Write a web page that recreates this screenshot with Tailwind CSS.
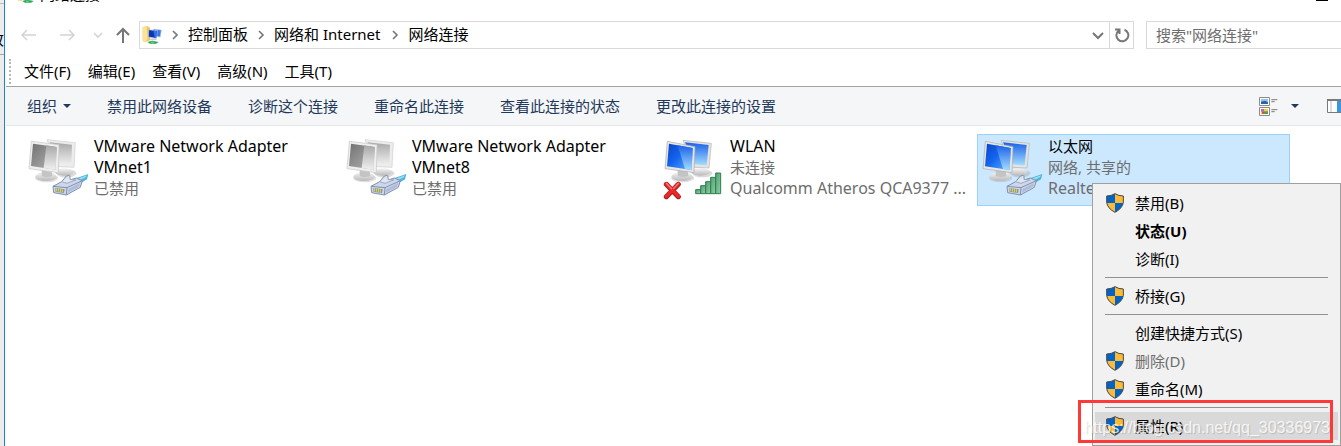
<!DOCTYPE html>
<html lang="zh-CN">
<head>
  <meta charset="UTF-8" />
  <meta name="viewport" content="width=device-width, initial-scale=1.0"/>
  <title>网络连接</title>
  <script src="https://cdn.jsdelivr.net/npm/@tailwindcss/browser@4"></script>
</head>
<body class="relative min-h-screen flex overflow-hidden bg-white text-black text-[15px] leading-[21px] font-['Noto_Sans','Noto_Sans_CJK_SC',sans-serif]">

  <!-- Icon sprites -->
  <svg class="absolute w-0 h-0" aria-hidden="true">
    <defs>
      <linearGradient id="blueScreen" x1="0" y1="0" x2="1" y2="1">
        <stop offset="0" stop-color="#0a45c8"/><stop offset=".45" stop-color="#1463ee"/><stop offset="1" stop-color="#5fb4ff"/>
      </linearGradient>
      <linearGradient id="blueShine" x1="0" y1="0" x2="0" y2="1">
        <stop offset="0" stop-color="#1a62e8"/><stop offset="1" stop-color="#a4dcff"/>
      </linearGradient>
      <linearGradient id="grayScreen" x1="0" y1="0" x2="1" y2="1">
        <stop offset="0" stop-color="#727272"/><stop offset="1" stop-color="#b4b4b4"/>
      </linearGradient>
      <linearGradient id="grayShine" x1="0" y1="0" x2="0" y2="1">
        <stop offset="0" stop-color="#a8a8a8"/><stop offset="1" stop-color="#efefef"/>
      </linearGradient>
      <linearGradient id="metal" x1="0" y1="0" x2="0" y2="1">
        <stop offset="0" stop-color="#f4f4f4"/><stop offset="1" stop-color="#b9b9b9"/>
      </linearGradient>
      <linearGradient id="barGreen" x1="0" y1="0" x2="1" y2="1">
        <stop offset="0" stop-color="#4fa06f"/><stop offset="1" stop-color="#8fd0a6"/>
      </linearGradient>
      <symbol id="stands" viewBox="18 15 192 198">
        <ellipse cx="136" cy="130" rx="30" ry="12" fill="#999" opacity=".35"/>
        <ellipse cx="130" cy="126" rx="28" ry="11" fill="url(#metal)"/>
        <ellipse cx="77" cy="144" rx="35" ry="13" fill="#999" opacity=".3"/>
        <ellipse cx="75" cy="140" rx="32" ry="13" fill="url(#metal)"/>
        <path d="M62 118L92 122L94 138Q78 144 62 138Z" fill="#c4c4c4"/>
      </symbol>
      <symbol id="pcBlue" viewBox="18 15 192 198">
        <use href="#stands" x="18" y="15" width="192" height="198"/>
        <path d="M78 31L163 40L156 114L112 112Z" fill="#e3e3e3" stroke="#b4b4b4" stroke-width="2"/>
        <path d="M84 37L155 45L149 106L112 103Z" fill="url(#blueShine)"/>
        <path d="M31 34L114 50L111 128L24 116Z" fill="#e6e6e6" stroke="#aaa" stroke-width="2"/>
        <path d="M36 41L107 54L104 120L30 109Z" fill="url(#blueScreen)"/>
        <path d="M62 46L107 54L104 120L84 117Z" fill="url(#blueShine)"/>
      </symbol>
      <symbol id="pcGray" viewBox="18 15 192 198">
        <use href="#stands" x="18" y="15" width="192" height="198"/>
        <path d="M78 29L163 38L159 112L112 110Z" fill="#ececec" stroke="#cfcfcf" stroke-width="2"/>
        <path d="M86 37L153 44L151 104L112 102Z" fill="url(#grayShine)"/>
        <path d="M31 34L114 44L112 128L24 116Z" fill="#efefef" stroke="#c6c6c6" stroke-width="2"/>
        <path d="M36 41L107 51L104 119L30 108Z" fill="url(#grayScreen)"/>
        <path d="M76 46L107 51L104 119L68 114Z" fill="url(#grayShine)"/>
      </symbol>
      <symbol id="plug" viewBox="18 15 192 198">
        <path d="M156 148L202 132L198 148L178 160Z" fill="#4db4dc"/>
        <path d="M166 148L198 136L194 142L172 153Z" fill="#9be0f4"/>
        <path d="M96 169L122 155L136 138L146 136L147 150L166 144L184 152L178 172L136 195L98 188Z" fill="#cdd7e9" stroke="#8190ae" stroke-width="3" stroke-linejoin="round"/>
        <path d="M96 169L138 173L184 152M138 173L136 195" fill="none" stroke="#8190ae" stroke-width="3"/>
        <path d="M122 155L138 160L164 150L147 148L146 136" fill="#dfe6f2" stroke="#8190ae" stroke-width="2"/>
        <path d="M142 177L178 158L174 170L141 188Z" fill="#aebddb"/>
        <path d="M103 174L131 178L129 189L103 185Z" fill="#8e9880"/>
        <path d="M106 175v9M112 176v9M118 177v9M124 178v9" stroke="#e2d774" stroke-width="3"/>
      </symbol>
      <symbol id="wifiOff" viewBox="18 15 192 198">
        <path d="M28 163L64 200M64 163L28 200" stroke="#a91111" stroke-width="15" stroke-linecap="round"/>
        <path d="M28 162L64 199M64 162L28 199" stroke="#e8292b" stroke-width="11" stroke-linecap="round"/>
        <path d="M28 160L44 176M64 160L50 175" stroke="#f68080" stroke-width="4" stroke-linecap="round"/>
        <g fill="url(#barGreen)" stroke="#2f7d50" stroke-width="3">
          <path d="M116 179h15v12h-15z"/><path d="M131 167h15v24h-15z"/><path d="M146 155h15v36h-15z"/><path d="M161 142h15v49h-15z"/><path d="M176 129h15v62h-15z"/>
        </g>
      </symbol>
      <symbol id="shield" viewBox="0 0 54 60">
        <path d="M27 2Q38 9 52 9V28Q50 46 27 58Q4 46 2 28V9Q16 9 27 2Z" fill="#0063c6"/>
        <path d="M27 2Q38 9 52 9V30H27Z" fill="#ffba35"/>
        <path d="M2 30H27V58Q5 46 2 30Z" fill="#ffba35"/>
        <path d="M27 2Q38 9 52 9V28Q50 46 27 58Q4 46 2 28V9Q16 9 27 2Z" fill="none" stroke="#4b4b4b" stroke-width="3"/>
      </symbol>
      <symbol id="netFolder" viewBox="0 0 60 60">
        <path d="M2 6L16 3L24 8V46L8 52L2 48Z" fill="#ecc75f"/>
        <path d="M2 6L14 3L17 42L8 52L2 48Z" fill="#fbe49a"/>
        <path d="M34 12L58 15L55 36L36 34Z" fill="#3a78e0" stroke="#c9d3e4" stroke-width="2"/>
        <path d="M20 14L46 17L43 40L19 36Z" fill="#0c35b5" stroke="#c5cfe0" stroke-width="2"/>
        <path d="M34 17L45 18L43 38L38 37Z" fill="#2f74e6"/>
        <ellipse cx="34" cy="43" rx="10" ry="3" fill="#c9cdd2"/>
        <path d="M16 51L30 47L50 51L42 56L24 56Z" fill="#29a65a"/>
        <path d="M26 50L38 50L34 53L28 53Z" fill="#7fdc9d"/>
      </symbol>
    </defs>
  </svg>

  <!-- Window behind -->
  <div class="w-1 shrink-0 bg-[#ececec] overflow-hidden" aria-hidden="true">
    <div class="h-1 border-b border-[#bdbdbd]"></div>
    <div class="h-[51px] pt-[25px] border-b border-[#a5a5a5] flex justify-end"><span>改</span></div>
  </div>

  <div class="flex-1 min-w-0 border-l border-[#1883d7]">
    <!-- Title bar -->
    <header class="h-[21px] flex justify-between">
      <div class="flex items-start gap-[3px] pl-3 -mt-4">
        <svg class="w-5 h-5"><use href="#netFolder"/></svg>
        <span class="whitespace-nowrap">网络连接</span>
      </div>
      <div class="w-3 h-px mr-[13px] bg-black"></div>
    </header>

    <!-- Address bar -->
    <div class="flex h-7">
      <div class="w-[134px] shrink-0 flex items-center pl-4">
        <button aria-label="后退"><svg class="w-4 h-4" viewBox="0 0 16 16" fill="none" stroke="#d4d4d4" stroke-width="1.5"><path d="M15 8H1M6 3L1 8l5 5"/></svg></button>
        <button class="ml-[23px]" aria-label="前进"><svg class="w-4 h-4" viewBox="0 0 16 16" fill="none" stroke="#d4d4d4" stroke-width="1.5"><path d="M0 8h14M9 3l5 5-5 5"/></svg></button>
        <button class="ml-[17px]" aria-label="最近的位置"><svg class="w-2.5 h-2.5" viewBox="0 0 10 10" fill="none" stroke="#d4d4d4" stroke-width="1.6"><path d="M1 3l4 4 4-4"/></svg></button>
        <button class="ml-3" aria-label="上移"><svg class="w-4 h-4" viewBox="0 0 16 16" fill="none" stroke="#767676" stroke-width="2"><path d="M8 16V2M2 8l6-6 6 6"/></svg></button>
      </div>
      <nav class="flex-1 flex items-center border border-[#d9d9d9] pl-[2px] pb-px whitespace-nowrap">
        <svg class="w-5 h-5 shrink-0"><use href="#netFolder"/></svg>
        <svg class="w-2 h-2.5 mx-[9px]" viewBox="0 0 8 10" fill="none" stroke="#767676" stroke-width="1.6"><path d="M2 1l4 4-4 4"/></svg>
        <a href="#">控制面板</a>
        <svg class="w-2 h-2.5 mx-[9px]" viewBox="0 0 8 10" fill="none" stroke="#767676" stroke-width="1.6"><path d="M2 1l4 4-4 4"/></svg>
        <a href="#">网络和 Internet</a>
        <svg class="w-2 h-2.5 mx-[10px]" viewBox="0 0 8 10" fill="none" stroke="#767676" stroke-width="1.6"><path d="M2 1l4 4-4 4"/></svg>
        <a href="#">网络连接</a>
        <button class="ml-auto mr-1" aria-label="以前的位置"><svg class="w-3.5 h-3.5" viewBox="0 0 14 14" fill="none" stroke="#767676" stroke-width="2"><path d="M2 5l5 5 5-5"/></svg></button>
      </nav>
      <button class="w-6 flex items-center justify-center border border-l-0 border-[#d9d9d9]" aria-label="刷新">
        <svg class="w-4 h-4" viewBox="0 0 16 16" fill="none" stroke="#767676" stroke-width="2"><path d="M10.500 2.700a6 6 0 1 1-6 1M1 2.500h4.500V7"/></svg>
      </button>
      <input type="search" aria-label="搜索" placeholder='搜索"网络连接"' class="w-[195px] ml-3 pl-[9px] border border-r-0 border-[#d9d9d9] placeholder:text-[#6d6d6d]"/>
    </div>

    <!-- Menu bar -->
    <div class="h-[38px] pt-2 flex items-center border-b border-[#a0a3a8] ml-px">
      <div class="w-[2px] h-[25px] ml-[3px] border-l-2 border-dotted border-[#b8b8b8]"></div>
      <div class="flex gap-[17px] ml-[13px] whitespace-nowrap">
        <button>文件(F)</button>
        <button>编辑(E)</button>
        <button>查看(V)</button>
        <button>高级(N)</button>
        <button>工具(T)</button>
      </div>
    </div>

    <!-- Command bar -->
    <div class="h-[39px] ml-px pl-[21px] flex items-center border-b border-[#e5e6e7] bg-[#f5f6f7] text-[#1e395b] whitespace-nowrap overflow-hidden">
      <div class="flex gap-9">
        <button class="flex items-center gap-[6px]">组织
          <svg class="w-2 h-1" viewBox="0 0 8 4"><path d="M0 0h8L4 4z" fill="#1e395b"/></svg>
        </button>
        <button>禁用此网络设备</button>
        <button>诊断这个连接</button>
        <button>重命名此连接</button>
        <button>查看此连接的状态</button>
        <button>更改此连接的设置</button>
      </div>
      <button class="ml-auto flex items-center gap-[13px]" aria-label="更改视图">
        <svg class="w-[19px] h-[19px]" viewBox="0 0 57 57">
          <path d="M1.500 1.500h30v24h-30zM1.500 31.500h30v24h-30z" fill="#fff" stroke="#8b8b8b" stroke-width="3"/>
          <path d="M6 6h21v15H6z" fill="#8fc4f0"/><path d="M6 14l12-3 9 5v5H6z" fill="#2c62a8"/>
          <path d="M6 36h21v15H6z" fill="#f0c94e"/><path d="M6 36h9v8H6z" fill="#b06ac0"/><path d="M14 43h13v8H14z" fill="#4da44d"/><path d="M9 44h7v7H9z" fill="#d7533c"/>
          <path d="M37 8h18M37 14h10M37 38h18M37 44h10" stroke="#7a7a7a" stroke-width="3"/>
        </svg>
        <svg class="w-2 h-1" viewBox="0 0 8 4"><path d="M0 0h8L4 4z" fill="#1e395b"/></svg>
      </button>
      <button class="ml-7 flex" aria-label="预览窗格">
        <svg class="w-[14px] h-[14px]" viewBox="0 0 14 14"><path d="M.5.5H14v13H.5z" fill="#fff" stroke="#7a7a7a"/><path d="M0 0h14v2H0z" fill="#7a7a7a"/><path d="M4 2v11" stroke="#bbb"/><path d="M10 2h4v11h-4z" fill="#3a96dd"/></svg>
      </button>
    </div>

    <!-- Connections -->
    <main class="grid grid-cols-[repeat(auto-fill,313px)] gap-x-[5px] pt-2 pl-[18px]">
      <div class="flex gap-[3px] h-[72px] px-[3px] border border-transparent">
        <svg class="w-16 h-[66px] shrink-0"><use href="#pcGray"/><use href="#plug"/></svg>
        <div class="w-[200px] pt-px">
          <p class="text-base leading-[21px]">VMware Network Adapter VMnet1</p>
          <p class="text-[#6d6d6d]">已禁用</p>
        </div>
      </div>
      <div class="flex gap-[3px] h-[72px] px-[3px] border border-transparent">
        <svg class="w-16 h-[66px] shrink-0"><use href="#pcGray"/><use href="#plug"/></svg>
        <div class="w-[200px] pt-px">
          <p class="text-base leading-[21px]">VMware Network Adapter VMnet8</p>
          <p class="text-[#6d6d6d]">已禁用</p>
        </div>
      </div>
      <div class="flex gap-[3px] h-[72px] px-[3px] border border-transparent">
        <svg class="w-16 h-[66px] shrink-0"><use href="#pcBlue"/><use href="#wifiOff"/></svg>
        <div class="min-w-0 pt-px">
          <p class="text-base leading-[21px]">WLAN</p>
          <p class="text-[#6d6d6d]">未连接</p>
          <p class="text-base leading-[21px] text-[#6d6d6d] whitespace-nowrap">Qualcomm Atheros QCA9377 ...</p>
        </div>
      </div>
      <div class="flex gap-[3px] h-[72px] px-[3px] border border-[#99d1ff] bg-[#cce8ff]">
        <svg class="w-16 h-[66px] shrink-0"><use href="#pcBlue"/><use href="#plug"/></svg>
        <div class="min-w-0 pt-px">
          <p>以太网</p>
          <p class="text-[#6d6d6d]">网络, 共享的</p>
          <p class="text-base leading-[21px] text-[#6d6d6d]">Realte</p>
        </div>
      </div>
    </main>
  </div>

  <!-- Context menu -->
  <div class="absolute right-0 top-[183px] w-[249px] py-[5px] px-[2px] border border-[#a0a0a0] bg-[#f1f1f1] whitespace-nowrap" role="menu">
    <button role="menuitem" class="w-full h-7 flex items-center gap-[10px] pl-[10px]"><svg class="w-5 h-5"><use href="#shield"/></svg>禁用(B)</button>
    <button role="menuitem" class="w-full h-7 flex items-center pl-10 font-bold">状态(U)</button>
    <button role="menuitem" class="w-full h-7 flex items-center pl-10">诊断(I)</button>
    <hr class="my-1 mx-[10px] border-[#919191]"/>
    <button role="menuitem" class="w-full h-7 flex items-center gap-[10px] pl-[10px]"><svg class="w-5 h-5"><use href="#shield"/></svg>桥接(G)</button>
    <hr class="my-1 mx-[10px] border-[#919191]"/>
    <button role="menuitem" class="w-full h-7 flex items-center pl-10">创建快捷方式(S)</button>
    <button role="menuitem" class="w-full h-7 flex items-center gap-[10px] pl-[10px] text-[#6d6d6d]" disabled><svg class="w-5 h-5"><use href="#shield"/></svg>删除(D)</button>
    <button role="menuitem" class="w-full h-7 flex items-center gap-[10px] pl-[10px]"><svg class="w-5 h-5"><use href="#shield"/></svg>重命名(M)</button>
    <hr class="my-1 mx-[10px] border-[#919191]"/>
    <button role="menuitem" class="w-full h-7 flex items-center gap-[10px] pl-[10px] bg-[#d9d9d9]"><svg class="w-5 h-5"><use href="#shield"/></svg>属性(R)</button>
  </div>

  <!-- Highlight frame with watermark -->
  <div class="absolute right-2 top-[400px] w-[255px] h-[43px] pt-3 border-3 border-[#ff3838] flex items-center justify-end pointer-events-none">
    <span class="text-base text-white/80 [text-shadow:1px_1px_1px_rgb(0_0_0/0.15)] font-['Liberation_Sans',sans-serif] whitespace-nowrap">https://blog.csdn.net/qq_30336973</span>
  </div>
</body>
</html>
